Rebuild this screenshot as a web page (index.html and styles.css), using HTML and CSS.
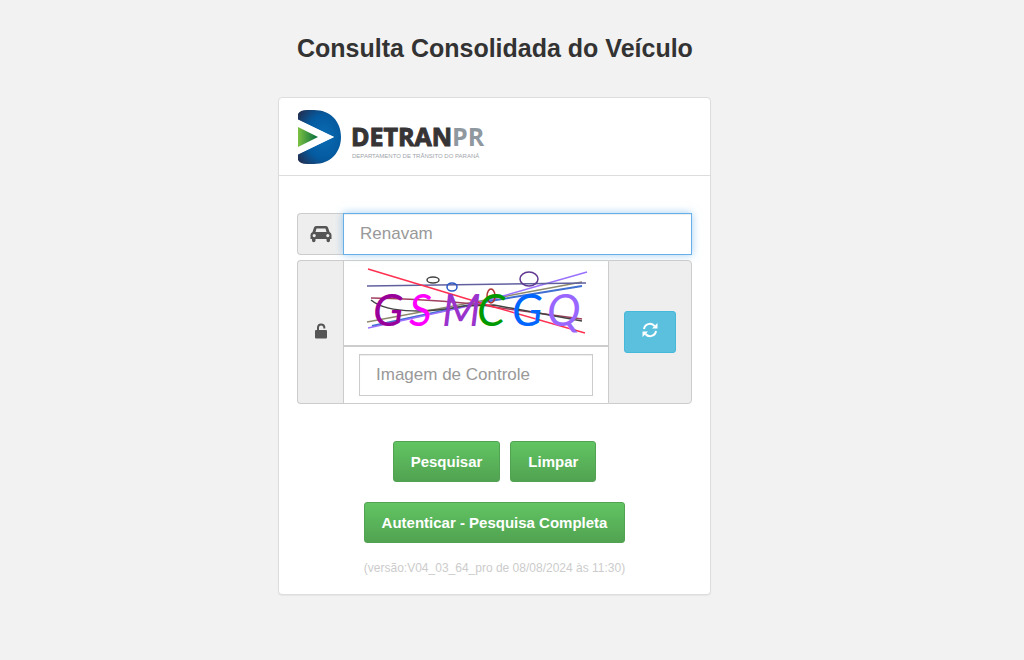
FILE: index.html
```html
<!DOCTYPE html>
<html lang="pt-BR">
<head>
	<meta charset="utf-8">
	<meta name="viewport" content="width=device-width, initial-scale=1">
	<title>Consulta Consolidada do Veículo</title>
	<link rel="stylesheet" href="styles.css">
</head>
<body>
	<main class="container">
		<h1>Consulta Consolidada do Veículo</h1>
		<form class="panel" action="#" method="post">
			<div class="panel-heading">
				<svg class="logo" viewBox="0 0 200 54" role="img" aria-label="Detran PR">
					<defs>
						<radialGradient id="azul" cx=".6" cy=".5" r=".75">
							<stop offset="0" stop-color="#0a6cb4"/>
							<stop offset=".55" stop-color="#055a9f"/>
							<stop offset="1" stop-color="#232c4c"/>
						</radialGradient>
						<linearGradient id="verde" x1="0" y1="0" x2="1" y2="0">
							<stop offset="0" stop-color="#7cc242"/>
							<stop offset="1" stop-color="#00693c"/>
						</linearGradient>
					</defs>
					<path fill="url(#azul)" d="M1 4Q3 0 10 0H17C33 0 44 11 44 27S33 54 17 54H10Q3 54 1 50V44L37 27L1 10Z"/>
					<path fill="#fff" d="M0 9L37 27L0 45V37L20 27L0 17Z"/>
					<path fill="url(#verde)" d="M1 17L21 27L1 37Z"/>
					<text class="logo-nome" x="54" y="36">DETRAN</text>
					<text class="logo-uf" x="155" y="36">PR</text>
					<text class="logo-sub" x="55" y="48">DEPARTAMENTO DE TRÂNSITO DO PARANÁ</text>
				</svg>
			</div>
			<div class="panel-body">
				<div class="input-group">
					<label class="addon addon-left" for="renavam">
						<svg class="icon-car" viewBox="0 0 22 18" role="img" aria-label="Renavam">
							<path fill="#555" fill-rule="evenodd" d="M6 1H16Q17.500 1 18 2.500L19.500 7Q21.500 8 21.500 10V14H20V15.500A1.500 1.500 0 0 1 16.500 15.500V14H5.500V15.500A1.500 1.500 0 0 1 2 15.500V14H.5V10Q.5 8 2.500 7L4 2.500Q4.500 1 6 1ZM6.500 3.500L5.500 7H16.500L15.500 3.500ZM4.200 9A1.600 1.600 0 1 0 4.200 12.200A1.600 1.600 0 1 0 4.200 9ZM17.800 9A1.600 1.600 0 1 0 17.800 12.200A1.600 1.600 0 1 0 17.800 9Z"/>
						</svg>
					</label>
					<input class="form-control focused" type="text" id="renavam" name="renavam" placeholder="Renavam">
				</div>
				<div class="input-group">
					<label class="addon addon-left" for="controle">
						<svg class="icon-lock" viewBox="0 0 14 18" role="img" aria-label="Imagem de Controle">
							<path fill="none" stroke="#555" stroke-width="2" d="M4 7V4.500A3.200 3.200 0 0 1 10.300 4V5.500"/>
							<rect x="1" y="7" width="12" height="8.500" rx="1" fill="#555"/>
						</svg>
					</label>
					<div class="captcha">
						<svg class="captcha-img" viewBox="0 0 264 84" role="img" aria-label="Imagem de controle">
							<g fill="none" stroke-width="1.500">
								<path stroke="#8d8a6c" d="M23 61L238 21"/>
								<path stroke="#3f6fd0" stroke-width="2" d="M28 65L140 41L238 25"/>
								<path stroke="#9a70ff" d="M24 67L120 46L243 11"/>
								<path stroke="#60609f" d="M23 25L242 22"/>
								<path stroke="#a04060" d="M27 37Q110 39 150 46L238 58"/>
								<path stroke="#444" d="M27 39C45 54 90 51 120 45L150 44L238 60"/>
								<path stroke="#ff3050" d="M24 8L150 46L241 72"/>
								<ellipse stroke="#444" cx="89" cy="19" rx="6" ry="3"/>
								<ellipse stroke="#2858c8" cx="108" cy="26" rx="5" ry="4"/>
								<ellipse stroke="#603890" cx="185" cy="18" rx="9" ry="7"/>
								<ellipse stroke="#b03030" cx="147" cy="35" rx="4" ry="7"/>
							</g>
							<text class="captcha-text" y="65"><tspan x="29" fill="#990099">G</tspan><tspan x="65" fill="#ff00ff">S</tspan><tspan x="98" fill="#9933cc">M</tspan><tspan x="133" fill="#009900">C</tspan><tspan x="168" fill="#0066ff">G</tspan><tspan x="203" fill="#9966ff">Q</tspan></text>
						</svg>
						<div class="captcha-field">
							<input class="form-control" type="text" id="controle" name="controle" placeholder="Imagem de Controle">
						</div>
					</div>
					<div class="addon addon-right">
						<button class="btn btn-info" type="button" aria-label="Atualizar imagem">
							<svg class="icon-refresh" viewBox="0 0 16 16">
								<path fill="none" stroke="#fff" stroke-width="2" d="M2 7A6 6 0 0 1 12.500 4M14 9A6 6 0 0 1 3.500 12"/>
								<path fill="#fff" d="M15.500 1V6.500H10ZM.5 15V9.500H6Z"/>
							</svg>
						</button>
					</div>
				</div>
				<div class="buttons buttons-form">
					<button class="btn btn-success" type="submit">Pesquisar</button>
					<button class="btn btn-success" type="reset">Limpar</button>
				</div>
				<div class="buttons">
					<button class="btn btn-success" type="button">Autenticar - Pesquisa Completa</button>
				</div>
				<p class="versao">(versão:V04_03_64_pro de 08/08/2024 às 11:30)</p>
			</div>
		</form>
	</main>
</body>
</html>
```
FILE: styles.css
```css
* {
	box-sizing: border-box;
}
body {
	margin: 0;
	padding-right: 35px;
	background-color: #f2f2f2;
	color: #333;
	font-family: "Liberation Sans", Arial, sans-serif;
	font-size: 14px;
}
.container {
	max-width: 433px;
	margin: 0 auto;
	padding: 32px 0;
}
h1 {
	margin: 0 0 33px;
	padding-left: 19px;
	font-size: 25px;
	line-height: 32px;
	white-space: nowrap;
}
.panel {
	background-color: #fff;
	border: 1px solid #ddd;
	border-radius: 4px;
	box-shadow: 0 1px 1px rgba(0, 0, 0, .05);
}
.panel-heading {
	padding: 12px 18px 11px;
	border-bottom: 1px solid #ddd;
}
.logo {
	display: block;
	width: 200px;
	height: 54px;
}
.logo-nome, .logo-uf {
	font-family: "Open Sans", sans-serif;
	font-size: 25px;
	font-weight: 700;
	fill: #373435;
	stroke: #373435;
	stroke-width: 1px;
}
.logo-uf {
	fill: #8f989f;
	stroke: none;
}
.logo-sub {
	font-family: "Liberation Sans", Arial, sans-serif;
	font-size: 6px;
	fill: #a0a5aa;
}
.panel-body {
	padding: 37px 18px 17px;
}
.input-group {
	display: flex;
	margin-bottom: 5px;
}
.addon {
	display: flex;
	align-items: center;
	justify-content: center;
	background-color: #eee;
	border: 1px solid #ccc;
}
.addon-left {
	width: 46px;
	border-right: 0;
	border-radius: 4px 0 0 4px;
}
.addon-right {
	padding: 0 15px;
	border-radius: 0 4px 4px 0;
}
.icon-car {
	width: 22px;
	height: 18px;
}
.icon-lock {
	width: 14px;
	height: 18px;
}
.icon-refresh {
	width: 16px;
	height: 16px;
}
.form-control {
	flex: 1;
	width: 100%;
	min-width: 0;
	height: 42px;
	padding: 0 16px;
	border: 1px solid #ccc;
	border-radius: 0;
	background-color: #fff;
	box-shadow: inset 0 1px 1px rgba(0, 0, 0, .075);
	font-family: inherit;
	font-size: 17px;
	color: #555;
}
.form-control::placeholder {
	color: #999;
	opacity: 1;
}
.focused, .form-control:focus {
	border-color: #66afe9;
	outline: 0;
	box-shadow: inset 0 1px 1px rgba(0, 0, 0, .075), 0 0 8px rgba(102, 175, 233, .6);
}
.captcha {
	flex: 1;
	min-width: 0;
	border: 1px solid #ccc;
	border-right: 0;
}
.captcha-img {
	display: block;
	width: 100%;
	height: 84px;
}
.captcha-text {
	font-family: Lato, sans-serif;
	font-size: 45px;
	font-style: italic;
}
.captcha-field {
	padding: 7px 15px;
	border-top: 2px solid #ccc;
}
.captcha-field .form-control {
	display: block;
}
.btn {
	border: 1px solid transparent;
	border-radius: 3px;
	font-family: inherit;
	font-size: 15px;
	font-weight: bold;
	line-height: 20px;
	color: #fff;
	cursor: pointer;
}
.btn-info {
	width: 52px;
	height: 42px;
	padding: 0;
	background-color: #5bc0de;
	border-color: #46b8da;
}
.btn-success {
	height: 41px;
	padding: 0 17px;
	background-image: linear-gradient(#62c462, #51a351);
	border-color: #51a351;
}
.buttons {
	display: flex;
	justify-content: center;
	gap: 10px;
	margin-bottom: 16px;
}
.buttons-form {
	margin: 37px 0 20px;
}
.versao {
	margin: 0;
	text-align: center;
	font-size: 12px;
	line-height: 18px;
	color: #ccc;
}
```
